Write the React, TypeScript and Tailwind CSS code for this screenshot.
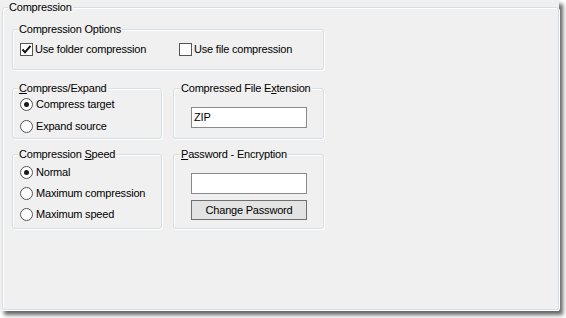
import React from "react";

const font = { fontFamily: '"Liberation Sans", Arial, sans-serif' };

function GroupBox({
  title,
  className,
  titleLeft,
  children,
}: {
  title: React.ReactNode;
  className: string;
  titleLeft: string;
  children?: React.ReactNode;
}) {
  return (
    <div className={`relative border border-[#d5dfe5] rounded-[3px] shadow-[inset_1px_1px_0_#ffffff,1px_1px_0_#ffffff] ${className}`}>
      <span className={`absolute top-[-8px] ${titleLeft} px-[1px] bg-[#f0f0f0] leading-[14px] whitespace-nowrap`}>
        {title}
      </span>
      {children}
    </div>
  );
}

function CheckBox({ checked, label, className }: { checked: boolean; label: string; className?: string }) {
  return (
    <div className={`flex items-center h-[13px] ${className ?? ""}`}>
      <div className="w-[13px] h-[13px] border border-[#555555] bg-white flex items-center justify-center shrink-0">
        {checked && (
          <svg width="11" height="11" viewBox="0 0 11 11">
            <path d="M1.5 5.5 L4 8.3 L9.5 1.8" fill="none" stroke="#111" strokeWidth="2" />
          </svg>
        )}
      </div>
      <span className="ml-[2px] leading-[13px] whitespace-nowrap">{label}</span>
    </div>
  );
}

function Radio({ checked, label, h }: { checked: boolean; label: string; h: string }) {
  return (
    <div className={`flex items-center ${h}`}>
      <div className="w-[13px] h-[13px] rounded-full border border-[#555555] bg-white flex items-center justify-center shrink-0">
        {checked && <div className="w-[5px] h-[5px] rounded-full bg-[#1a1a1a]" />}
      </div>
      <span className="ml-[3px] whitespace-nowrap">{label}</span>
    </div>
  );
}

export default function App() {
  return (
    <div className="w-[566px] h-[318px] bg-white text-[11px] text-black tracking-[-0.2px]" style={font}>
      <div className="w-[559px] h-[311px] bg-[#f0f0f0] pt-[7px] pl-[2px] shadow-[4px_4px_4px_rgba(0,0,0,0.6)]">
        <GroupBox title="Compression" titleLeft="left-[5px]" className="w-[557px] h-[303px] pt-[21px] pl-[9px]">
          <div className="flex flex-col">
            <GroupBox title="Compression Options" titleLeft="left-[5px]" className="w-[312px] h-[41px] pt-[13px] pl-[7px]">
              <div className="flex">
                <CheckBox checked label="Use folder compression" className="w-[159px]" />
                <CheckBox checked={false} label="Use file compression" />
              </div>
            </GroupBox>

            <div className="flex mt-[18px] gap-[11px]">
              <GroupBox
                title={<><u>C</u>ompress/Expand</>}
                titleLeft="left-[5px]"
                className="w-[150px] h-[51px] pt-[4px] pl-[7px]"
              >
                <Radio checked label="Compress target" h="h-[22px]" />
                <Radio checked={false} label="Expand source" h="h-[22px]" />
              </GroupBox>
              <GroupBox
                title={<>Compressed File E<u>x</u>tension</>}
                titleLeft="left-[6px]"
                className="w-[151px] h-[51px] pt-[18px] pl-[17px]"
              >
                <div className="w-[116px] h-[21px] border border-[#8a8a8a] bg-white pl-[2px] leading-[19px]">ZIP</div>
              </GroupBox>
            </div>

            <div className="flex mt-[15px] gap-[11px]">
              <GroupBox
                title={<>Compression <u>S</u>peed</>}
                titleLeft="left-[5px]"
                className="w-[150px] h-[75px] pt-[7px] pl-[7px]"
              >
                <Radio checked label="Normal" h="h-[21px]" />
                <Radio checked={false} label="Maximum compression" h="h-[21px]" />
                <Radio checked={false} label="Maximum speed" h="h-[21px]" />
              </GroupBox>
              <GroupBox
                title={<><u>P</u>assword - Encryption</>}
                titleLeft="left-[6px]"
                className="w-[151px] h-[75px] pt-[18px] pl-[17px]"
              >
                <div className="w-[116px] h-[21px] border border-[#8a8a8a] bg-white" />
                <div className="mt-[6px] w-[116px] h-[20px] border border-[#707070] bg-[#e3e3e3] flex items-center justify-center leading-[18px]">
                  Change Password
                </div>
              </GroupBox>
            </div>
          </div>
        </GroupBox>
      </div>
    </div>
  );
}
